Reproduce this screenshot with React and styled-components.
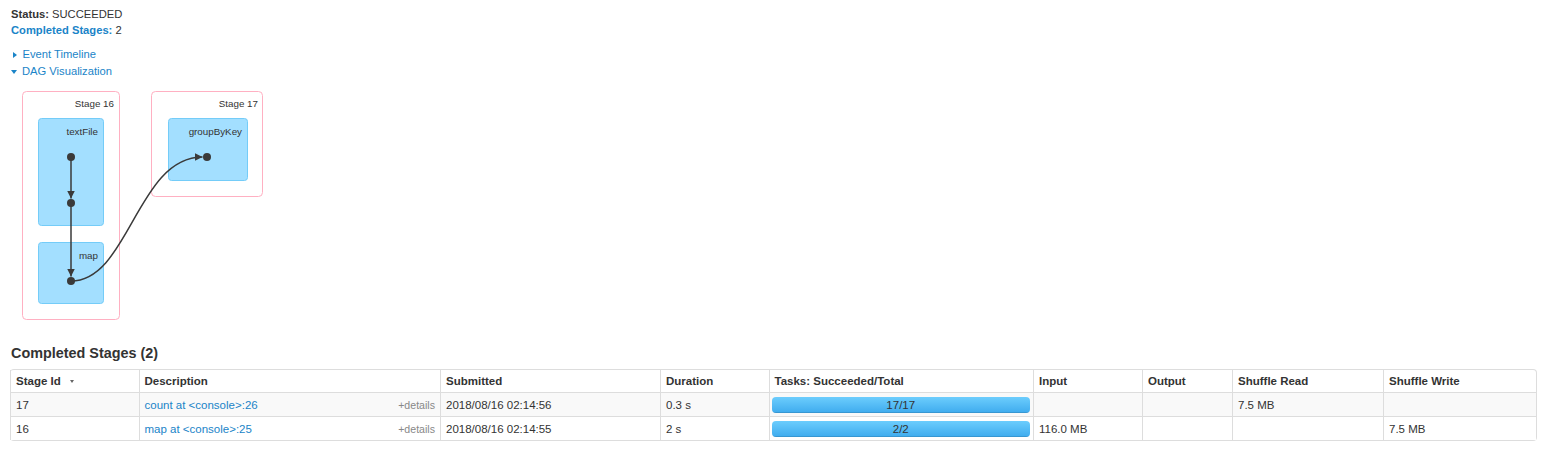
import styled, { createGlobalStyle } from 'styled-components';

const GlobalStyle = createGlobalStyle`
  body {
    margin: 0;
    background: #fff;
    font-family: "Liberation Sans", Arial, sans-serif;
    color: #333;
  }
`;

const Page = styled.main`
  padding: 6px 6px 0 10px;
`;

const Summary = styled.ul`
  list-style: none;
  margin: 0 0 8px;
  padding: 0 0 0 1px;
  font-size: 11.2px;
  line-height: 16px;
`;

const Label = styled.strong`
  color: ${(p) => (p.link ? '#1a84c8' : '#333')};
`;

const Toggles = styled.div`
  display: flex;
  flex-direction: column;
  padding-left: 1px;
  font-size: 11.2px;
  line-height: 17px;
`;

const Toggle = styled.a`
  display: flex;
  align-items: center;
  gap: 5px;
  color: #1a84c8;
  text-decoration: none;
  cursor: pointer;
`;

const Arrow = styled.span`
  display: inline-block;
  width: 0;
  height: 0;
  ${(p) =>
    p.open
      ? `border-left: 3.5px solid transparent;
         border-right: 3.5px solid transparent;
         border-top: 4px solid #1a84c8;`
      : `border-top: 3.5px solid transparent;
         border-bottom: 3.5px solid transparent;
         border-left: 4px solid #1a84c8;
         margin: 0 1px 0 1.5px;`}
`;

const Dag = styled.svg`
  display: block;
  margin-top: 5px;
  font-family: "Liberation Sans", Arial, sans-serif;
`;

const Heading = styled.h4`
  margin: 18px 0 6px;
  font-size: 14.4px;
  line-height: 20px;
  font-weight: bold;
  color: #333;
  padding-left: 1px;
`;

const Table = styled.table`
  width: 100%;
  table-layout: fixed;
  border-collapse: separate;
  border-spacing: 0;
  border: 1px solid #ddd;
  border-left: 0;
  border-radius: 4px;
  font-size: 11.5px;
  line-height: 14.4px;
`;

const Th = styled.th`
  text-align: left;
  font-weight: bold;
  padding: 4px 5px;
  border-left: 1px solid #ddd;
  color: #333;
  cursor: pointer;
`;

const Row = styled.tr`
  background: ${(p) => (p.striped ? '#f9f9f9' : '#fff')};
`;

const Td = styled.td`
  padding: 4px 5px;
  border-left: 1px solid #ddd;
  border-top: 1px solid #ddd;
  color: #333;
  white-space: nowrap;
  overflow: hidden;
`;

const BarCell = styled(Td)`
  padding: 3px 3px 3px 2px;
`;

const SortArrow = styled.span`
  display: inline-block;
  margin-left: 9px;
  vertical-align: middle;
  border-left: 2px solid transparent;
  border-right: 2px solid transparent;
  border-top: 3px solid #666;
`;

const DescLink = styled.a`
  color: #1a84c8;
  text-decoration: none;
`;

const Details = styled.span`
  float: right;
  font-size: 10.6px;
  color: #888;
  cursor: pointer;
`;

const Progress = styled.div`
  position: relative;
  height: 16px;
  margin-top: 1px;
  border-radius: 4px;
  overflow: hidden;
  background: linear-gradient(to bottom, #f5f5f5, #f9f9f9);
`;

const ProgressFill = styled.div`
  height: 100%;
  background: linear-gradient(to bottom, #6ccdfd, #3eabee);
  box-shadow: inset 0 -1px 0 rgba(0, 0, 0, 0.12);
`;

const ProgressText = styled.span`
  position: absolute;
  inset: 0;
  text-align: center;
  line-height: 16px;
  color: #333;
`;

const columns = [
  ['Stage Id', 128.5],
  ['Description', 301.5],
  ['Submitted', 220],
  ['Duration', 108.5],
  ['Tasks: Succeeded/Total', 264.5],
  ['Input', 109],
  ['Output', 90],
  ['Shuffle Read', 151],
  ['Shuffle Write', 153],
];

const stages = [
  {
    id: 17,
    desc: 'count at <console>:26',
    submitted: '2018/08/16 02:14:56',
    duration: '0.3 s',
    done: 17,
    total: 17,
    input: '',
    output: '',
    read: '7.5 MB',
    write: '',
  },
  {
    id: 16,
    desc: 'map at <console>:25',
    submitted: '2018/08/16 02:14:55',
    duration: '2 s',
    done: 2,
    total: 2,
    input: '116.0 MB',
    output: '',
    read: '',
    write: '7.5 MB',
  },
];

function DagViz() {
  const label = { fontSize: 9.8, fill: '#333', textAnchor: 'end' };
  return (
    <Dag width="260" height="240" viewBox="11 85 260 240">
      <defs>
        <marker id="head" viewBox="0 0 10 10" refX="10" refY="5" markerWidth="5" markerHeight="5" orient="auto">
          <path d="M0,0 L10,5 L0,10 z" fill="#3a3a3a" />
        </marker>
      </defs>
      <rect x="23.5" y="91.5" width="97" height="228" rx="4" fill="#fff" stroke="#ffb0c2" />
      <text x="115" y="107" style={label}>Stage 16</text>
      <rect x="152.5" y="91.5" width="111" height="105" rx="4" fill="#fff" stroke="#ffb0c2" />
      <text x="259" y="107" style={label}>Stage 17</text>

      <rect x="39.5" y="118.5" width="65" height="107" rx="3" fill="#a3dfff" stroke="#74ccf8" />
      <text x="99" y="134.5" style={label}>textFile</text>
      <rect x="39.5" y="242.5" width="65" height="61" rx="3" fill="#a3dfff" stroke="#74ccf8" />
      <text x="99" y="258.5" style={label}>map</text>
      <rect x="169.5" y="118.5" width="79" height="62" rx="3" fill="#a3dfff" stroke="#74ccf8" />
      <text x="243" y="134.5" style={label}>groupByKey</text>

      <g fill="none" stroke="#3a3a3a" strokeWidth="1.5">
        <path d="M72,157 L72,198.5" markerEnd="url(#head)" />
        <path d="M72,203 L72,276.5" markerEnd="url(#head)" />
        <path d="M72,281 C130,281 138,157 203.5,157" markerEnd="url(#head)" />
      </g>
      <g fill="#3a3a3a">
        <circle cx="72" cy="157" r="4" />
        <circle cx="72" cy="203" r="4" />
        <circle cx="72" cy="281" r="4" />
        <circle cx="208" cy="157" r="4" />
      </g>
    </Dag>
  );
}

export default function App() {
  return (
    <>
      <GlobalStyle />
      <Page>
        <Summary>
          <li>
            <Label>Status:</Label> SUCCEEDED
          </li>
          <li>
            <Label link>Completed Stages:</Label> 2
          </li>
        </Summary>
        <Toggles>
          <Toggle>
            <Arrow />
            Event Timeline
          </Toggle>
          <Toggle>
            <Arrow open />
            DAG Visualization
          </Toggle>
        </Toggles>
        <DagViz />
        <Heading>Completed Stages (2)</Heading>
        <Table>
          <colgroup>
            {columns.map(([name, w]) => (
              <col key={name} style={{ width: w }} />
            ))}
          </colgroup>
          <thead>
            <tr>
              {columns.map(([name], i) => (
                <Th key={name}>
                  {name}
                  {i === 0 && <SortArrow />}
                </Th>
              ))}
            </tr>
          </thead>
          <tbody>
            {stages.map((s, i) => (
              <Row key={s.id} striped={i % 2 === 0}>
                <Td>{s.id}</Td>
                <Td>
                  <DescLink>{s.desc}</DescLink>
                  <Details>+details</Details>
                </Td>
                <Td>{s.submitted}</Td>
                <Td>{s.duration}</Td>
                <BarCell>
                  <Progress>
                    <ProgressFill style={{ width: `${(s.done / s.total) * 100}%` }} />
                    <ProgressText>
                      {s.done}/{s.total}
                    </ProgressText>
                  </Progress>
                </BarCell>
                <Td>{s.input}</Td>
                <Td>{s.output}</Td>
                <Td>{s.read}</Td>
                <Td>{s.write}</Td>
              </Row>
            ))}
          </tbody>
        </Table>
      </Page>
    </>
  );
}
